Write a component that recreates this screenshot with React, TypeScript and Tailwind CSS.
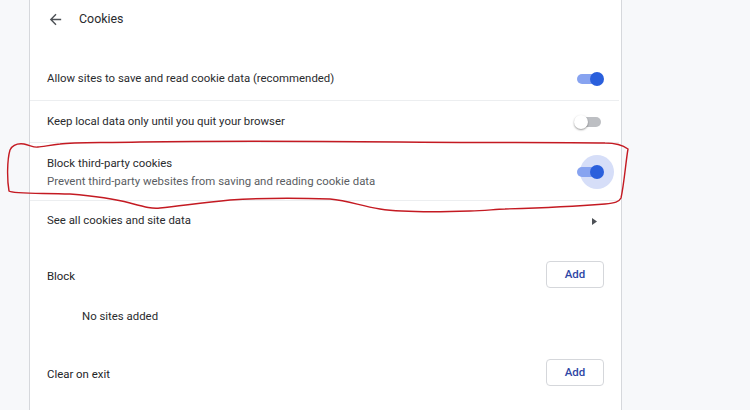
import React from "react";

function Toggle({ on, halo }: { on: boolean; halo?: boolean }) {
  return (
    <div className="relative w-[30px] h-[14px] flex items-center">
      {halo && (
        <div className="absolute left-[6px] top-[-10px] w-[34px] h-[34px] rounded-full bg-[#d6def8]" />
      )}
      <div
        className={
          on
            ? "absolute left-[3px] w-[24px] h-[10px] rounded-full bg-[#87a3f0]"
            : "absolute left-[3px] w-[24px] h-[10px] rounded-full bg-[#bdbfc3]"
        }
      />
      <div
        className={
          on
            ? "absolute left-[16px] w-[14px] h-[14px] rounded-full bg-[#2a5fdc]"
            : "absolute left-0 w-[14px] h-[14px] rounded-full bg-white shadow-[0_1px_2px_rgba(0,0,0,0.4)]"
        }
      />
    </div>
  );
}

function AddButton() {
  return (
    <button className="w-[58px] h-[27px] rounded-[4px] border border-[#d5d7db] bg-white text-[11.5px] font-medium text-[#2f47a5]">
      Add
    </button>
  );
}

export default function App() {
  return (
    <div
      className="relative w-[750px] h-[410px] overflow-hidden bg-[#f7f8fa] flex text-[#2a2b2e]"
      style={{ fontFamily: "Roboto, 'Open Sans', sans-serif" }}
    >
      <div className="w-[29px] shrink-0" />
      <div className="w-[593px] shrink-0 bg-white border-x border-[#d6d8dc] flex flex-col text-[11.4px]">
        {/* header */}
        <div className="h-[38px] flex items-center pl-[17px]">
          <svg width="17" height="17" viewBox="0 0 24 24" className="text-[#4d5156]">
            <path
              d="M20 11H7.83l5.59-5.59L12 4l-8 8 8 8 1.41-1.41L7.83 13H20v-2z"
              fill="currentColor"
            />
          </svg>
          <span className="ml-[15px] text-[12.4px] text-[#2a2b2e]">Cookies</span>
        </div>
        <div className="h-[19px]" />
        {/* row 1 */}
        <div className="h-[43px] flex items-center justify-between pl-[17px] pr-[17px]">
          <span className="mt-[1px]">Allow sites to save and read cookie data (recommended)</span>
          <Toggle on />
        </div>
        <div className="mr-[2px] h-px bg-[#eceef0]" />
        {/* row 2 */}
        <div className="h-[41px] flex items-center justify-between pl-[17px] pr-[17px]">
          <span className="mt-[1px]">Keep local data only until you quit your browser</span>
          <Toggle on={false} />
        </div>
        <div className="mr-[2px] h-px bg-[#eceef0]" />
        {/* row 3 */}
        <div className="h-[57px] flex items-center justify-between pl-[17px] pr-[17px]">
          <div className="flex flex-col leading-[18px] mt-[1px]">
            <span>Block third-party cookies</span>
            <span className="text-[#5a5d62]">Prevent third-party websites from saving and reading cookie data</span>
          </div>
          <Toggle on halo />
        </div>
        <div className="mr-[2px] h-px bg-[#eceef0]" />
        {/* row 4 */}
        <div className="h-[40px] flex items-center justify-between pl-[17px] pr-[24px]">
          <span>See all cookies and site data</span>
          <svg width="5" height="7" viewBox="0 0 5 7">
            <path d="M0 0 L5 3.5 L0 7 Z" fill="#4d5156" />
          </svg>
        </div>
        {/* Block section */}
        <div className="pt-[20px] flex items-center justify-between pl-[17px] pr-[17px]">
          <span className="mt-[5px] text-[#232427]">Block</span>
          <AddButton />
        </div>
        <div className="h-[58px] flex items-center pl-[52px]">
          <span>No sites added</span>
        </div>
        <div className="pt-[13px] flex items-center justify-between pl-[17px] pr-[17px]">
          <span className="mt-[5px] text-[#232427]">Clear on exit</span>
          <AddButton />
        </div>
      </div>
      <div className="flex-1" />

      {/* hand-drawn annotation */}
      <svg
        className="absolute inset-0 pointer-events-none"
        width="750"
        height="410"
        viewBox="0 0 750 410"
      >
        <path
          d="M38 147 C34 148 30 145 24 144 C16 143 12 146 10 150 C7 160 7 180 9 191 C12 194 40 193 70 194 C95 196 115 199 130 203 C145 207 152 209 160 208 C180 206 200 203 230 200 C260 198 300 198 330 199 C350 201 360 206 380 209 C400 212 440 212 470 211 C485 211 495 209 505 209 C540 208 580 206 605 204 C615 203 619 202 621 198 C624 185 626 160 628 149 C624 146 618 143 605 143 C560 142 480 143 400 142 C300 141 200 141 140 142 C100 143 75 142 60 144 C50 145 42 147 38 147"
          fill="none"
          stroke="#c41a22"
          strokeWidth="1.4"
          strokeLinecap="round"
        />
      </svg>
    </div>
  );
}
